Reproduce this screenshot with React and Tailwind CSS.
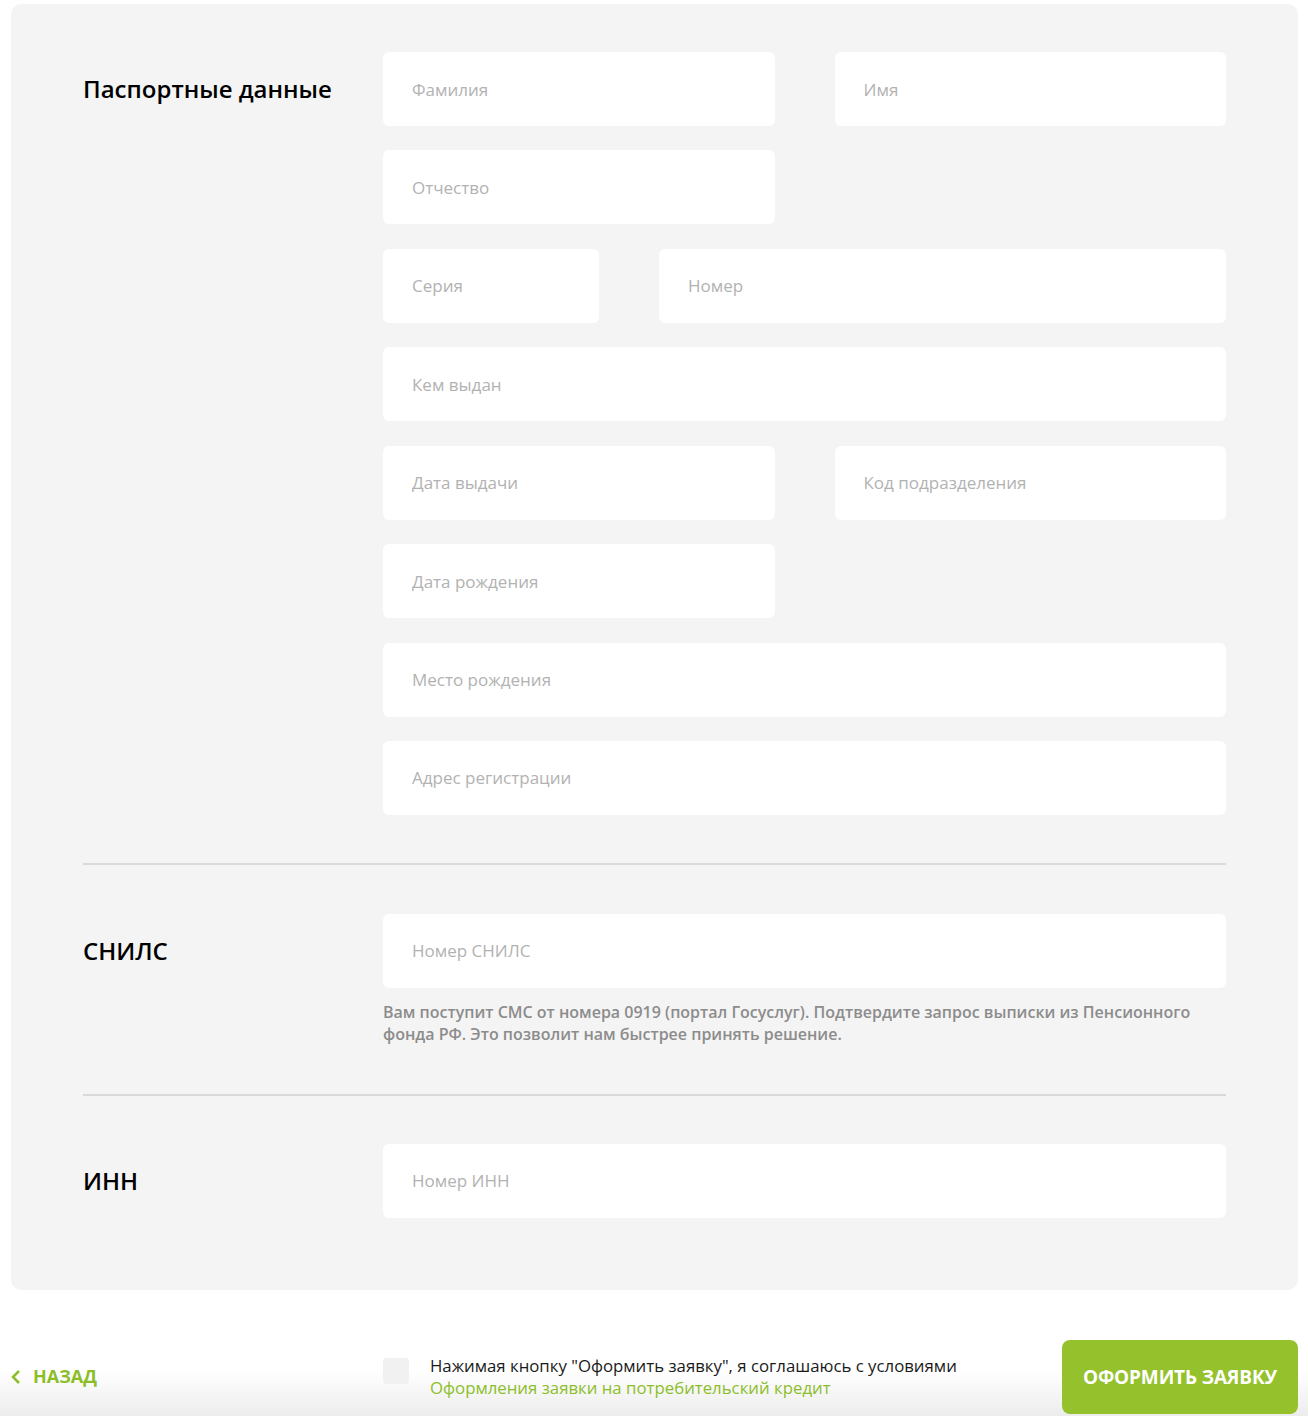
import { useState } from "react";

const font = { fontFamily: '"Open Sans", "Liberation Sans", sans-serif' };

function Field({ placeholder, className = "" }) {
  return (
    <input
      className={
        "h-[74px] rounded-[6px] bg-white px-[29px] text-[17px] text-[#333] outline-none placeholder:text-[#b2b2b2] " +
        className
      }
      placeholder={placeholder}
    />
  );
}

function Section({ title, children }) {
  return (
    <div className="flex">
      <div className="w-[300px] shrink-0 h-[74px] flex items-center">
        <h2 className="text-[24px] font-semibold text-black">{title}</h2>
      </div>
      <div className="flex-1 flex flex-col">{children}</div>
    </div>
  );
}

export default function App() {
  const [agree, setAgree] = useState(false);

  return (
    <div className="min-h-[1416px] bg-white pt-[4px]" style={font}>
      <div className="ml-[11px] mr-[10px] rounded-[10px] bg-[#f4f4f4] px-[72px] pt-[48px] pb-[72px]">
        <Section title="Паспортные данные">
          <div className="flex flex-col gap-[24.43px]">
            <div className="grid grid-cols-2 gap-x-[60px]">
              <Field placeholder="Фамилия" />
              <Field placeholder="Имя" />
            </div>
            <div className="grid grid-cols-2 gap-x-[60px]">
              <Field placeholder="Отчество" />
            </div>
            <div className="flex gap-[60px]">
              <Field placeholder="Серия" className="w-[216px]" />
              <Field placeholder="Номер" className="flex-1" />
            </div>
            <Field placeholder="Кем выдан" />
            <div className="grid grid-cols-2 gap-x-[60px]">
              <Field placeholder="Дата выдачи" />
              <Field placeholder="Код подразделения" />
            </div>
            <div className="grid grid-cols-2 gap-x-[60px]">
              <Field placeholder="Дата рождения" />
            </div>
            <Field placeholder="Место рождения" />
            <Field placeholder="Адрес регистрации" />
          </div>
        </Section>

        <div className="mt-[48px] mb-[49px] h-[2px] bg-[#d9d9d9]" />

        <Section title="СНИЛС">
          <Field placeholder="Номер СНИЛС" />
          <p className="mt-[13px] text-[16px] leading-[22px] font-semibold text-[#8c8c8c]">
            Вам поступит СМС от номера 0919 (портал Госуслуг). Подтвердите запрос выписки из Пенсионного
            фонда РФ. Это позволит нам быстрее принять решение.
          </p>
        </Section>

        <div className="mt-[49px] mb-[48px] h-[2px] bg-[#d9d9d9]" />

        <Section title="ИНН">
          <Field placeholder="Номер ИНН" />
        </Section>
      </div>

      <div className="mt-[50px] bg-gradient-to-b from-white from-40% to-[#ececec] pl-[11px] pr-[10px] pb-[3px] flex items-center">
        <div className="w-[372px] shrink-0">
          <button className="flex items-center gap-[12px] text-[#8cbe2a] text-[18px] font-bold uppercase">
            <svg width="10" height="16" viewBox="0 0 10 16" fill="none">
              <path d="M8 2L2 8l6 6" stroke="#8cbe2a" strokeWidth="2.5" />
            </svg>
            Назад
          </button>
        </div>
        <div className="flex items-start gap-[21px]">
          <button
            onClick={() => setAgree(!agree)}
            className="mt-[3px] w-[26px] h-[26px] rounded-[4px] bg-[#f1f1f1]"
          >
            {agree && <span className="text-[#8cbe2a]">✓</span>}
          </button>
          <div className="text-[16.8px] leading-[22px]">
            <div className="text-[#1a1a1a]">
              Нажимая кнопку "Оформить заявку", я соглашаюсь с условиями
            </div>
            <a className="text-[#8cbe2a]" href="#">
              Оформления заявки на потребительский кредит
            </a>
          </div>
        </div>
        <button className="ml-auto w-[236px] h-[74px] rounded-[8px] bg-[#94c12c] text-white text-[19px] font-bold uppercase tracking-[-0.15px]">
          Оформить заявку
        </button>
      </div>
    </div>
  );
}
